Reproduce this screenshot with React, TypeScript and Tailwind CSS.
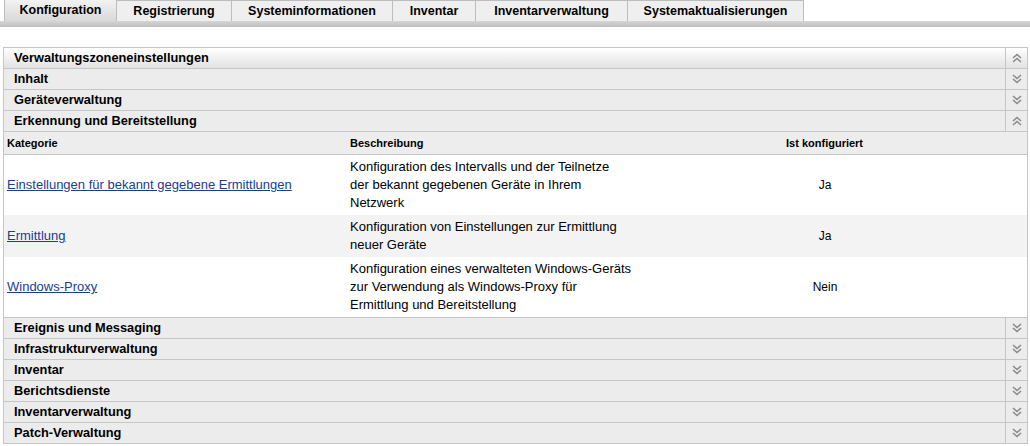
import React from 'react';

const tabs = [
  { label: 'Konfiguration', w: 'w-[113px]' },
  { label: 'Registrierung', w: 'w-[115px]' },
  { label: 'Systeminformationen', w: 'w-[161px]' },
  { label: 'Inventar', w: 'w-[83px]' },
  { label: 'Inventarverwaltung', w: 'w-[152px]' },
  { label: 'Systemaktualisierungen', w: 'w-[176px]' },
];

const rows = [
  {
    name: 'Einstellungen für bekannt gegebene Ermittlungen',
    desc: ['Konfiguration des Intervalls und der Teilnetze', 'der bekannt gegebenen Geräte in Ihrem', 'Netzwerk'],
    value: 'Ja',
    h: 'h-[61px]',
  },
  {
    name: 'Ermittlung',
    desc: ['Konfiguration von Einstellungen zur Ermittlung', 'neuer Geräte'],
    value: 'Ja',
    h: 'h-[42px]',
  },
  {
    name: 'Windows-Proxy',
    desc: ['Konfiguration eines verwalteten Windows-Geräts', 'zur Verwendung als Windows-Proxy für', 'Ermittlung und Bereitstellung'],
    value: 'Nein',
    h: 'h-[60px]',
  },
];

const after = [
  'Ereignis und Messaging',
  'Infrastrukturverwaltung',
  'Inventar',
  'Berichtsdienste',
  'Inventarverwaltung',
  'Patch-Verwaltung',
];

function Chevrons({ up }: { up?: boolean }) {
  return (
    <svg width="10" height="10" viewBox="0 0 10 10" className={up ? 'rotate-180' : ''}>
      <polyline points="1,1 5,4.5 9,1" fill="none" stroke="#8a8a8a" strokeWidth="1.6" />
      <polyline points="1,5 5,8.5 9,5" fill="none" stroke="#8a8a8a" strokeWidth="1.6" />
    </svg>
  );
}

function Section({ title, up, top }: { title: string; up?: boolean; top?: boolean }) {
  return (
    <div
      className={
        'flex h-[21px] border-b border-[#c6c6c6] ' +
        (top ? 'bg-gradient-to-b from-white to-[#e2e2e2]' : 'bg-[#ececec]')
      }
    >
      <div className="flex-1 pl-[10px] flex items-center font-bold text-[12.8px] text-black">{title}</div>
      <div className="w-[22px] border-l border-[#c6c6c6] flex items-center justify-center">
        <Chevrons up={up} />
      </div>
    </div>
  );
}

export default function App() {
  return (
    <div className="w-[1030px] h-[446px] bg-white overflow-hidden font-['Liberation_Sans',Arial,sans-serif] text-black">
      {/* tab bar */}
      <div className="flex pl-[4px] h-[21px]">
        {tabs.map((t, i) => (
          <div
            key={t.label}
            className={
              t.w +
              ' flex items-center justify-center font-bold text-[12.5px] border-r border-t border-[#bdbdbd] ' +
              (i === 0
                ? 'bg-gradient-to-b from-[#f2f2f2] to-[#d9d9d9] border-l border-t-0'
                : 'bg-[#efefef]')
            }
          >
            {t.label}
          </div>
        ))}
      </div>
      <div className="h-[6px] bg-gradient-to-b from-[#d6d6d6] to-[#bdbdbd]" />

      {/* panel */}
      <div className="mt-[20px] mx-[3px] border border-[#c6c6c6] border-b-0 w-[1025px]">
        <Section title="Verwaltungszoneneinstellungen" up top />
        <Section title="Inhalt" />
        <Section title="Geräteverwaltung" />
        <Section title="Erkennung und Bereitstellung" up />

        <table className="w-full border-collapse text-[13px]">
          <thead>
            <tr className="bg-[#ededed] h-[22px] border-b border-[#c6c6c6]">
              <th className="text-left font-bold pl-[3px] w-[346px] text-[11px]">Kategorie</th>
              <th className="text-left font-bold w-[274px] text-[11px]">Beschreibung</th>
              <th className="text-center font-bold text-[11px] pr-[9px]">Ist konfiguriert</th>
            </tr>
          </thead>
          <tbody>
            {rows.map((r, i) => (
              <tr key={r.name} className={r.h + ' ' + (i === 1 ? 'bg-[#f3f3f3]' : 'bg-white')}>
                <td className="pl-[3px] align-middle">
                  <a className="text-[#1a3d96] underline" href="#">
                    {r.name}
                  </a>
                </td>
                <td className="leading-[18px] whitespace-nowrap">
                  {r.desc.map((d) => (
                    <div key={d}>{d}</div>
                  ))}
                </td>
                <td className="text-center text-[12px] pr-[8px]">{r.value}</td>
              </tr>
            ))}
          </tbody>
        </table>

        <div className="border-t border-[#c6c6c6]">
          {after.map((t) => (
            <Section key={t} title={t} />
          ))}
        </div>
      </div>
    </div>
  );
}
